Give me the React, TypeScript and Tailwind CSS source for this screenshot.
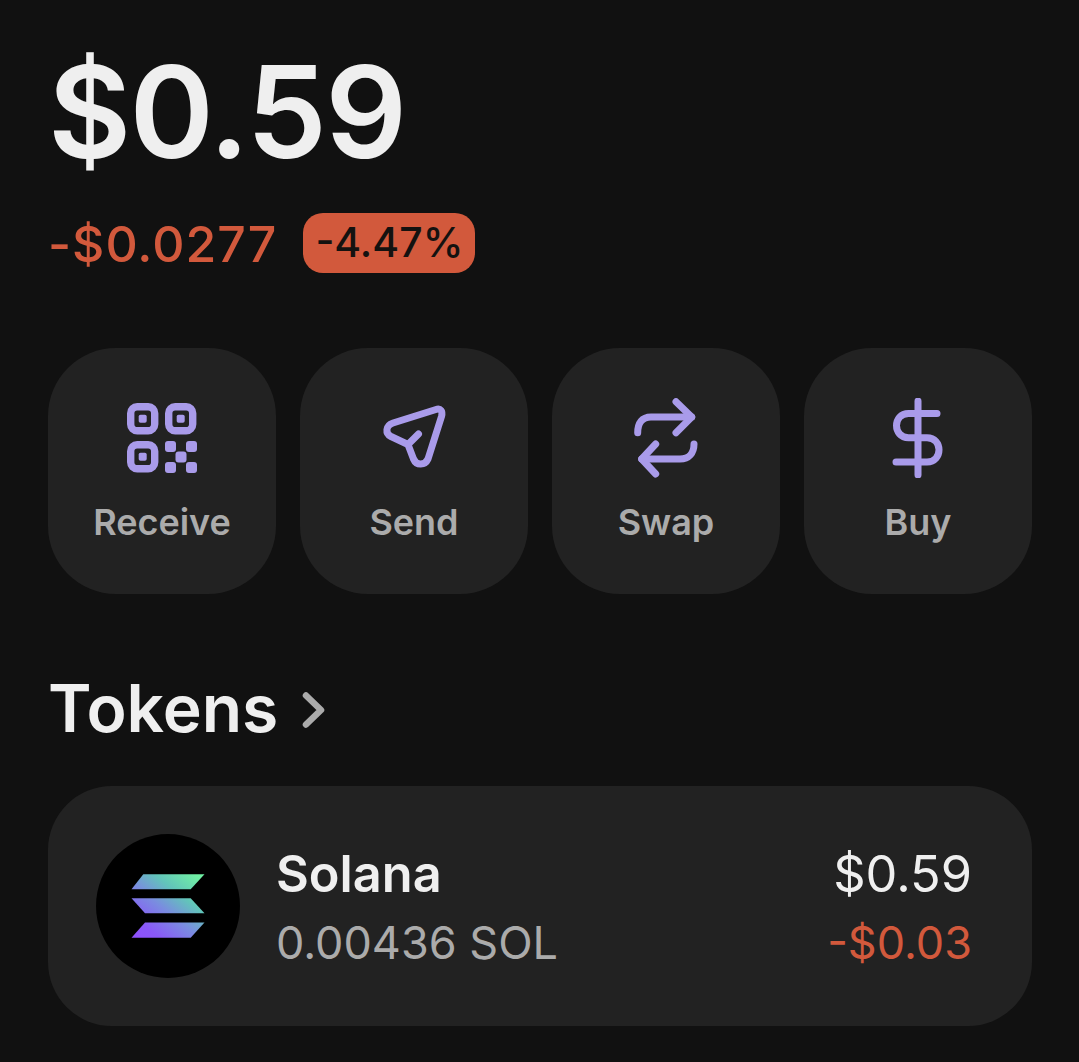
const Icon = ({ children }: { children: React.ReactNode }) => (
  <svg width="80" height="80" viewBox="0 0 80 80" fill="none" stroke="#A99BEA" strokeWidth="7" strokeLinecap="round" strokeLinejoin="round">
    {children}
  </svg>
);

const QrIcon = () => (
  <Icon>
    <g transform="translate(5 5)">
      <g strokeWidth="7.4">
        <rect x="3.7" y="3.7" width="24" height="24" rx="6.5" />
        <rect x="41.7" y="3.7" width="24" height="24" rx="6.5" />
        <rect x="3.7" y="41.7" width="24" height="24" rx="6.5" />
      </g>
      <g fill="#A99BEA" stroke="none">
        <rect x="11.7" y="11.7" width="8" height="8" rx="1.8" />
        <rect x="49.7" y="11.7" width="8" height="8" rx="1.8" />
        <rect x="11.7" y="49.7" width="8" height="8" rx="1.8" />
        <rect x="38" y="38" width="11" height="11" rx="3" />
        <rect x="59" y="38" width="11" height="11" rx="3" />
        <rect x="48.5" y="48.5" width="11" height="11" rx="3" />
        <rect x="38" y="59" width="11" height="11" rx="3" />
        <rect x="59" y="59" width="11" height="11" rx="3" />
      </g>
    </g>
  </Icon>
);

const SendIcon = () => (
  <Icon>
    <path d="M62 11.5 L19 25 C11.5 27.5 11 35.5 17 38.5 L34 46.5 L39.5 61 C42.5 68 51 67.5 54 61 L67.5 18.5 C69 13 66.5 10 62 11.5 Z" />
    <path d="M34 46.5 L44.5 36" />
  </Icon>
);

const SwapIcon = () => (
  <Icon>
    <path d="M11.7 34.7 C11.7 25 16 19 25 19 H65.7" />
    <path d="M50 3.7 L65.7 19 L50 34.7" />
    <path d="M68 46 C68 55 63 61 54 61 H15.7" />
    <path d="M29.7 46 L15.7 61 L29.7 76" />
  </Icon>
);

const DollarIcon = () => (
  <Icon>
    <path d="M40 3 V77" />
    <path d="M59 15.5 H30.5 C14.5 15.5 14.5 39.7 30.5 39.7 H49 C65 39.7 65 64 49 64 H18" />
  </Icon>
);

const actions = [
  { label: "Receive", icon: <QrIcon /> },
  { label: "Send", icon: <SendIcon /> },
  { label: "Swap", icon: <SwapIcon /> },
  { label: "Buy", icon: <DollarIcon /> },
];

const SolanaLogo = () => (
  <svg width="144" height="144" viewBox="96 834 144 144" className="shrink-0">
    <defs>
      <linearGradient id="sol" gradientUnits="userSpaceOnUse" x1="136" y1="942" x2="192" y2="872">
        <stop offset="0" stopColor="#9050FF" />
        <stop offset="0.2" stopColor="#8A58F8" />
        <stop offset="0.48" stopColor="#7A8CE0" />
        <stop offset="0.72" stopColor="#62C4BA" />
        <stop offset="1" stopColor="#70F0A4" />
      </linearGradient>
    </defs>
    <circle cx="168" cy="906" r="72" fill="#000" />
    <g fill="url(#sol)">
      <polygon points="143.3,874.3 204.5,874.3 190.7,889.3 131.5,889.3" />
      <polygon points="131.5,898.3 190.7,898.3 204.5,913.3 145,913.3" />
      <polygon points="145,922.5 204.5,922.5 190.7,937.7 131.5,937.7" />
    </g>
  </svg>
);

export default function App() {
  return (
    <div className="min-h-screen w-full bg-[#111111] pl-[48px] pr-[47px] pt-[48px] font-[Inter,sans-serif] text-[#EFEFEF]">
      <div className="text-[128px] font-semibold leading-[128px] tracking-[-1.75px]">$0.59</div>

      <div className="mt-[37px] flex h-[60px] items-center">
        <span className="pt-[2px] text-[50px] font-[550] leading-[60px] tracking-[1px] text-[#D2593C]">-$0.0277</span>
        <span className="ml-[26px] flex h-[60px] w-[172px] items-center justify-center rounded-[20px] bg-[#D2593C] text-[41px] font-[550] text-[#141210]">
          -4.47%
        </span>
      </div>

      <div className="mt-[75px] flex gap-[24px]">
        {actions.map((a) => (
          <div key={a.label} className="flex h-[246px] flex-1 flex-col items-center rounded-[68px] bg-[#222222] pt-[50px]">
            {a.icon}
            <span className="mt-[22px] text-[36px] font-[580] leading-[44px] text-[#ABABAB]">{a.label}</span>
          </div>
        ))}
      </div>

      <div className="mt-[82px] flex h-[64px] items-center">
        <span className="text-[66px] font-semibold leading-[64px]">Tokens</span>
        <svg className="ml-[24px] mt-[4px]" width="26" height="40" viewBox="0 0 26 40" fill="none" stroke="#ABABAB" strokeWidth="6.5" strokeLinecap="round" strokeLinejoin="round">
          <path d="M4 5.5 L19 20 L4 34.5" />
        </svg>
      </div>

      <div className="mt-[46px] flex h-[240px] items-center rounded-[64px] bg-[#222222] pl-[48px] pr-[60px]">
        <SolanaLogo />
        <div className="ml-[36px] flex flex-1 flex-col gap-[13px] pt-[4px]">
          <span className="text-[50.5px] font-semibold leading-[56px]">Solana</span>
          <span className="text-[45px] leading-[56px] text-[#ABABAB]">0.00436 SOL</span>
        </div>
        <div className="flex flex-col items-end gap-[13px] pt-[4px]">
          <span className="text-[50.5px] leading-[56px]">$0.59</span>
          <span className="text-[45px] leading-[56px] text-[#D2593C]">-$0.03</span>
        </div>
      </div>
    </div>
  );
}
